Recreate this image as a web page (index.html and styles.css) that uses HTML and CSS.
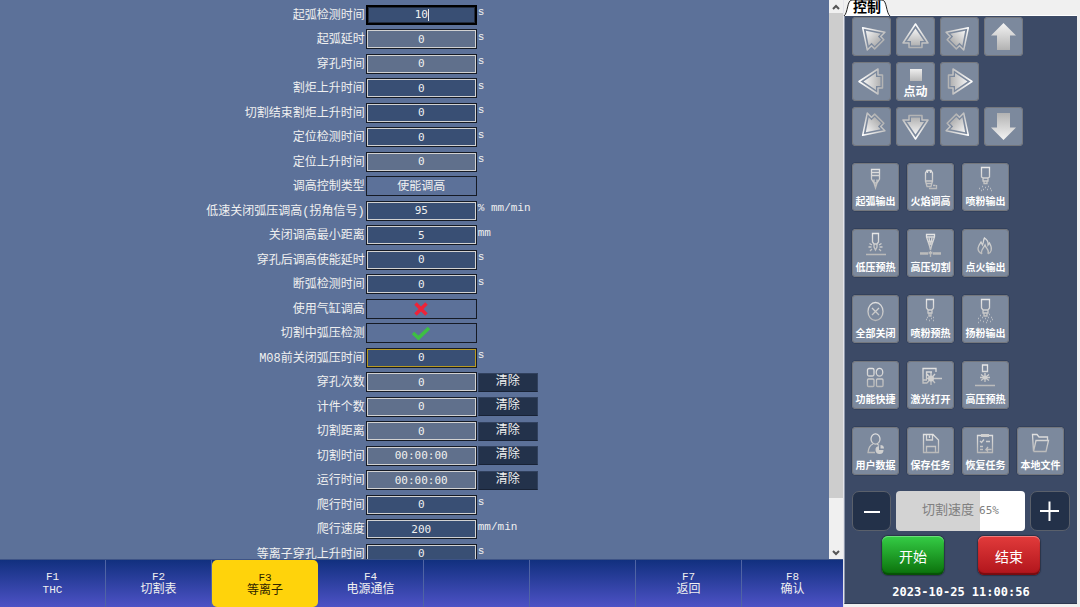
FILE: index.html
```html
<!DOCTYPE html>
<html lang="zh-CN">
<head>
    <meta charset="UTF-8">
    <meta name="viewport" content="width=device-width, initial-scale=1.0">
    <title>等离子</title>
    <link rel="stylesheet" href="styles.css">
</head>
<body>
    <svg class="defs" width="0" height="0" aria-hidden="true">
        <defs>
            <linearGradient id="arrow-line" x1="0" y1="0" x2="0" y2="1">
                <stop offset="0" stop-color="#fff"/>
                <stop offset="1" stop-color="#b4b4b4"/>
            </linearGradient>
            <linearGradient id="arrow-fill" x1="0" y1="0" x2="0" y2="1">
                <stop offset="0" stop-color="#f4f4f4"/>
                <stop offset="1" stop-color="#b2b2b2"/>
            </linearGradient>
            <linearGradient id="icon-line" gradientUnits="userSpaceOnUse" x1="0" y1="0" x2="0" y2="24">
                <stop offset="0" stop-color="#e8e8e8"/>
                <stop offset="1" stop-color="#b4b4b4"/>
            </linearGradient>
        </defs>
        <symbol id="arrow" viewBox="0 0 39 39">
            <path d="M19.5 7L32 26H26V30.500H13V26H7Z" fill="none" stroke="url(#arrow-line)" stroke-width="1.500" stroke-linejoin="round"/>
            <path d="M19.500 11.500L28 24H24V28.500H15V24H11Z" fill="url(#arrow-fill)"/>
        </symbol>
        <symbol id="big-arrow" viewBox="0 0 39 39">
            <path d="M19.500 6L32 18.500H26V33H13V18.500H7Z" fill="url(#arrow-fill)"/>
        </symbol>
    </svg>

    <div class="screen">
        <main class="main">
            <div class="viewport">
                <form class="params">
                    <div class="row"><label for="p1">起弧检测时间</label><input class="field active" id="p1" value="10"><span class="unit">s</span></div>
                    <div class="row"><label for="p2">起弧延时</label><input class="field muted" id="p2" value="0"><span class="unit">s</span></div>
                    <div class="row"><label for="p3">穿孔时间</label><input class="field muted" id="p3" value="0"><span class="unit">s</span></div>
                    <div class="row"><label for="p4">割炬上升时间</label><input class="field" id="p4" value="0"><span class="unit">s</span></div>
                    <div class="row"><label for="p5">切割结束割炬上升时间</label><input class="field" id="p5" value="0"><span class="unit">s</span></div>
                    <div class="row"><label for="p6">定位检测时间</label><input class="field" id="p6" value="0"><span class="unit">s</span></div>
                    <div class="row"><label for="p7">定位上升时间</label><input class="field muted" id="p7" value="0"><span class="unit">s</span></div>
                    <div class="row"><label for="p8">调高控制类型</label><select class="choice" id="p8"><option>使能调高</option></select></div>
                    <div class="row"><label for="p9">低速关闭弧压调高(拐角信号)</label><input class="field" id="p9" value="95"><span class="unit">% mm/min</span></div>
                    <div class="row"><label for="p10">关闭调高最小距离</label><input class="field" id="p10" value="5"><span class="unit">mm</span></div>
                    <div class="row"><label for="p11">穿孔后调高使能延时</label><input class="field" id="p11" value="0"><span class="unit">s</span></div>
                    <div class="row"><label for="p12">断弧检测时间</label><input class="field" id="p12" value="0"><span class="unit">s</span></div>
                    <div class="row">
                        <label for="p13">使用气缸调高</label>
                        <span class="check">
                            <input type="checkbox" id="p13">
                            <svg width="20" height="16" viewBox="0 0 20 16"><path d="M4.500 2.500L15.500 13.500M15.500 2.500L4.500 13.500" stroke="#ee2338" stroke-width="3.500"/></svg>
                        </span>
                    </div>
                    <div class="row">
                        <label for="p14">切割中弧压检测</label>
                        <span class="check">
                            <input type="checkbox" id="p14" checked>
                            <svg width="20" height="16" viewBox="0 0 20 16"><path d="M2 8L7.500 13L18 3" fill="none" stroke="#3dc043" stroke-width="3.500"/></svg>
                        </span>
                    </div>
                    <div class="row"><label for="p15">M08前关闭弧压时间</label><input class="field marked" id="p15" value="0"><span class="unit">s</span></div>
                    <div class="row"><label for="p16">穿孔次数</label><input class="field muted" id="p16" value="0"><button type="button" class="clear">清除</button></div>
                    <div class="row"><label for="p17">计件个数</label><input class="field muted" id="p17" value="0"><button type="button" class="clear">清除</button></div>
                    <div class="row"><label for="p18">切割距离</label><input class="field muted" id="p18" value="0"><button type="button" class="clear">清除</button></div>
                    <div class="row"><label for="p19">切割时间</label><input class="field muted" id="p19" value="00:00:00"><button type="button" class="clear">清除</button></div>
                    <div class="row"><label for="p20">运行时间</label><input class="field muted" id="p20" value="00:00:00"><button type="button" class="clear">清除</button></div>
                    <div class="row"><label for="p21">爬行时间</label><input class="field" id="p21" value="0"><span class="unit">s</span></div>
                    <div class="row"><label for="p22">爬行速度</label><input class="field" id="p22" value="200"><span class="unit">mm/min</span></div>
                    <div class="row"><label for="p23">等离子穿孔上升时间</label><input class="field" id="p23" value="0"><span class="unit">s</span></div>
                </form>
                <div class="scrollbar">
                    <button type="button" aria-label="向上"><svg width="8" height="6" viewBox="0 0 8 6"><path d="M1 5L4 2L7 5"/></svg></button>
                    <div class="track"><div class="thumb"></div></div>
                    <button type="button" aria-label="向下"><svg width="8" height="6" viewBox="0 0 8 6"><path d="M1 1L4 4L7 1"/></svg></button>
                </div>
            </div>
            <nav class="keys">
                <button type="button"><span class="latin">F1</span><span class="latin">THC</span></button>
                <button type="button"><span class="latin">F2</span><span>切割表</span></button>
                <button type="button" class="current"><span class="latin">F3</span><span>等离子</span></button>
                <button type="button"><span class="latin">F4</span><span>电源通信</span></button>
                <button type="button" aria-label="F5"></button>
                <button type="button" aria-label="F6"></button>
                <button type="button"><span class="latin">F7</span><span>返回</span></button>
                <button type="button"><span class="latin">F8</span><span>确认</span></button>
            </nav>
        </main>

        <aside class="side">
            <div class="tabs">
                <button type="button" class="tab">
                    <svg width="48" height="16" viewBox="0 0 48 16"><path d="M1 16C5 13 4 0 9 0H39C44 0 43 13 47 16" fill="#fff" stroke="#222"/></svg>
                    <span>控制</span>
                </button>
            </div>
            <div class="panel">
                <div class="jog">
                    <button type="button" aria-label="左上"><svg class="r315"><use href="#arrow"/></svg></button>
                    <button type="button" aria-label="上"><svg><use href="#arrow"/></svg></button>
                    <button type="button" aria-label="右上"><svg class="r45"><use href="#arrow"/></svg></button>
                    <button type="button" aria-label="升"><svg><use href="#big-arrow"/></svg></button>
                    <button type="button" aria-label="左"><svg class="r270"><use href="#arrow"/></svg></button>
                    <button type="button" class="step"><i></i><span>点动</span></button>
                    <button type="button" aria-label="右"><svg class="r90"><use href="#arrow"/></svg></button>
                    <button type="button" class="first" aria-label="左下"><svg class="r225"><use href="#arrow"/></svg></button>
                    <button type="button" aria-label="下"><svg class="r180"><use href="#arrow"/></svg></button>
                    <button type="button" aria-label="右下"><svg class="r135"><use href="#arrow"/></svg></button>
                    <button type="button" aria-label="降"><svg class="r180"><use href="#big-arrow"/></svg></button>
                </div>

                <div class="tools">
                    <button type="button"><svg viewBox="0 0 28 24"><path d="M9.500 2.500H17.500V12L15 16H12L9.500 12ZM9.500 5.500H17.500M9.500 8.500H17.500M12 12.500V16M15 12.500V16M12 16L13.500 21L15 16M12.500 18H14.500"/></svg><span>起弧输出</span></button>
                    <button type="button"><svg viewBox="0 0 28 24"><path d="M8.500 14V6L10 3.500H14L15.500 6V14ZM8.500 14L10 19.500H14L15.500 14M9 16.500H15M10.500 3V6M13.500 3V6M12 21.500H19.500V18M16 18.500H18.500"/></svg><span>火焰调高</span></button>
                    <button type="button"><svg viewBox="0 0 28 24"><path d="M9.500 .5H17.500V10L16 11H11L9.500 10ZM11 11V14H16V11M12 14V16.500H15V14"/><path class="dots" d="M10 19.500H11M13 20.500H14M16 19.500H17M7 21.500H8M11 22.500H12M15 22.500H16M18 21.500H19M9 23.500H10M19 23.500H20"/></svg><span>喷粉输出</span></button>
                    <button type="button" class="new-row"><svg viewBox="0 0 28 24"><path d="M10.500 .5H16.500V9L15 11H12L10.500 9ZM12 11V14L13.500 17L15 14V11M10 12L7.500 10.500M9.500 14H6.500M10 16L8 18M17 12L19.500 10.500M17.500 14H20.500M17 16L19 18M4 21.500H24"/></svg><span>低压预热</span></button>
                    <button type="button"><svg viewBox="0 0 28 24"><path d="M9.500 1.500H17.500V4L14.500 13L13.500 17L12.500 13L9.500 4ZM9.500 4H17.500M12 5L13.500 12L15 5M11 8.500H16M3 20H11M16 20H24M3 21H11M16 21H24M13.500 18V24M11.500 21L15.500 19M11.500 19L15.500 21"/></svg><span>高压切割</span></button>
                    <button type="button"><svg viewBox="0 0 28 24"><path d="M10 21C3 17 7 12 9 9L10.500 12C12 9 11 7 12.500 5C17 8 16 10 16 12L17.500 10C21 16 19 20 16 21M10 21C8 18 11 16 13 12C14 16 18 17 16 21"/></svg><span>点火输出</span></button>
                    <button type="button" class="new-row"><svg viewBox="0 0 28 24"><ellipse cx="13.500" cy="12.500" rx="7.500" ry="9"/><path d="M10 9L17 16M17 9L10 16"/></svg><span>全部关闭</span></button>
                    <button type="button"><svg viewBox="0 0 28 24"><path d="M9.500 .5H16.500V9L15 11H11L9.500 9ZM11 11V14H15V11M12 14V17H14V14"/><path class="dots" d="M10 18.500H11M14 19.500H15M16 18.500H17M9 20.500H10M12 21.500H13M16 21.500H17"/></svg><span>喷粉预热</span></button>
                    <button type="button"><svg viewBox="0 0 28 24"><path d="M9.500 .5H17.500V9L16 11H11L9.500 9ZM11 11V14H16V11M12 14V17H15V14"/><path class="dots" d="M8 16.500H9M17 15.500H18M10 18.500H11M13 19.500H14M16 18.500H17M19 18.500H20M6 19.500H7M8 21.500H9M11 22.500H12M15 21.500H16M18 22.500H19M20 20.500H21M6 23.500H7M14 23.500H15"/></svg><span>扬粉输出</span></button>
                    <button type="button" class="new-row"><svg viewBox="0 0 28 24"><rect x="5.500" y="3.500" width="6.500" height="7.500" rx="1.500"/><ellipse cx="17.500" cy="7.250" rx="3.250" ry="3.900"/><rect x="5.500" y="14" width="6.500" height="7.500" rx="1"/><rect x="14.500" y="14" width="6.500" height="7.500" rx="1"/></svg><span>功能快捷</span></button>
                    <button type="button"><svg viewBox="0 0 28 24"><path d="M10 18H6V3.500H19V7M9.500 14V7H15M6 15H10M9 13.500H25M14 7.500V20M10 9L18 18M18 9L10 18"/><circle cx="14" cy="13.500" r="3" class="solid"/></svg><span>激光打开</span></button>
                    <button type="button"><svg viewBox="0 0 28 24"><path d="M10.500 0V6.500H15.500V0ZM13 8V17M9 9.500L17 15.500M17 9.500L9 15.500M8 12.500H18M3 20.500H23"/><circle cx="13" cy="12.500" r="2" class="solid"/></svg><span>高压预热</span></button>
                    <button type="button" class="new-row"><svg viewBox="0 0 28 24"><ellipse cx="13.500" cy="8" rx="4.500" ry="5.200"/><path d="M11 13C8 14 6.500 17 6 21.500H13M15 13L17 14.500"/><path class="solid" d="M17 15V19H21.500A4 4 0 1 1 17 15ZM18.500 14V17.500H22C22 15 20.500 14 18.500 14Z"/></svg><span>用户数据</span></button>
                    <button type="button"><svg viewBox="0 0 28 24"><path d="M6.500 3.500H16L21.500 9V21.500H6.500ZM9.500 3.500V9H15.500V3.500M12.500 4.500V7M9.500 21V15.500H18.500V21"/></svg><span>保存任务</span></button>
                    <button type="button"><svg viewBox="0 0 28 24"><path d="M9 4.500H5.500V21.500H20.500V4.500H17M8 10L9.500 11.500L12 8.500M14 10.500H18M8 15.500H11M8 18.500H11M19.500 18.500H14L16 16M14 18.500L16 20.500"/><rect x="9" y="3" width="8" height="3" class="solid"/></svg><span>恢复任务</span></button>
                    <button type="button"><svg viewBox="0 0 28 24"><path d="M6.500 20.500L5.500 3.500H10L12 6H20.500V9M6.500 20.500H19L21.500 9.500H9L6.500 20.500"/></svg><span>本地文件</span></button>
                </div>

                <div class="speed">
                    <button type="button" aria-label="减速"><svg width="36" height="36" viewBox="0 0 36 36"><path d="M10 19H26"/></svg></button>
                    <label class="slider">
                        <input type="range" min="0" max="100" value="65">
                        <span class="caption"><span>切割速度</span><span class="percent">65%</span></span>
                    </label>
                    <button type="button" aria-label="加速"><svg width="36" height="36" viewBox="0 0 36 36"><path d="M8 18H27M17.500 8.500V28"/></svg></button>
                </div>

                <div class="run">
                    <button type="button" class="start">开始</button>
                    <button type="button" class="stop">结束</button>
                </div>
                <time class="clock" datetime="2023-10-25T11:00:56">2023-10-25 11:00:56</time>
            </div>
        </aside>
    </div>
</body>
</html>
```
FILE: styles.css
```css
* {
    box-sizing: border-box;
}

body {
    margin: 0;
    font-family: "Liberation Mono", "Noto Sans CJK SC", monospace;
    font-size: 12px;
    color: #f0f0f0;
    background: #f0f0f0;
}

button, input, select {
    margin: 0;
    padding: 0;
    font: inherit;
    color: inherit;
    border: none;
    border-radius: 0;
    appearance: none;
}

button {
    cursor: pointer;
}

svg {
    display: block;
}

.defs {
    position: absolute;
}

.screen {
    display: grid;
    grid-template-columns: minmax(0, 1fr) 236px;
    height: 100vh;
}

.main {
    display: flex;
    flex-direction: column;
    min-height: 0;
    background: #5c7199;
    border-right: 1px solid #e4e4ea;
}

.viewport {
    flex: 1;
    display: flex;
    min-height: 0;
}

/* parameter list */
.params {
    flex: 1;
    padding-top: 2px;
    overflow: hidden;
}

.row {
    display: grid;
    grid-template-columns: 44% 111px auto;
    justify-content: start;
    align-items: center;
    column-gap: 1px;
    height: 25px;
}

.row:nth-child(even) {
    height: 24px;
}

.row label {
    padding-top: 2px;
    text-align: right;
    line-height: 18px;
    white-space: nowrap;
}

.field, .choice, .check {
    width: 111px;
    height: 20px;
}

.field {
    font-family: "DejaVu Sans Mono", monospace;
    font-size: 11px;
    text-align: center;
    background: #394f74;
    border: 1px solid #151a24;
    box-shadow: inset 0 0 0 1px #d2d2d2;
    outline: none;
}

.field.muted {
    background: #60708c;
}

.field.marked {
    box-shadow: inset 0 0 0 1px #b79a22;
}

.field.active {
    border: 2px solid #000;
    box-shadow: inset 0 0 0 1px #222c3e;
    background: linear-gradient(#e8e8e8, #e8e8e8) calc(50% + 7px) 50% / 1px 12px no-repeat #394f74;
}

.choice, .check {
    background: transparent;
    border: 1px solid #151a24;
}

.choice {
    padding-top: 2px;
    text-align: center;
    text-align-last: center;
}

.check {
    display: grid;
    place-items: center;
}

.check input, .check svg {
    grid-area: 1 / 1;
}

.check input {
    width: 100%;
    height: 100%;
}

.check svg {
    pointer-events: none;
}

.unit {
    align-self: start;
    font-size: 11px;
    line-height: 20px;
}

.clear {
    width: 60px;
    height: 19px;
    line-height: 17px;
    background: #23324b;
    border: 1px solid #31415e;
    border-bottom-color: #182235;
}

.scrollbar {
    width: 14px;
    display: flex;
    flex-direction: column;
    background: #f0f0f0;
}

.scrollbar button {
    height: 13px;
    display: grid;
    place-items: center;
    background: #f0f0f0;
}

.scrollbar path {
    fill: none;
    stroke: #555;
    stroke-width: 2;
}

.track {
    flex: 1;
}

.thumb {
    height: 91%;
    background: #cdcdcd;
}

/* function keys */
.keys {
    display: grid;
    grid-template-columns: repeat(7, 106fr) 101fr;
    height: 48px;
    background: linear-gradient(#11307f, #4d52c5);
    border-top: 1px solid #3d5386;
}

.keys button {
    display: flex;
    flex-direction: column;
    align-items: center;
    justify-content: center;
    padding-top: 1px;
    line-height: 13px;
    background: transparent;
    border-right: 1px solid #5064a4;
}

.keys button:last-child {
    border-right: none;
}

.keys .latin {
    font-size: 11px;
}

.keys .current {
    padding-top: 3px;
    color: #2e2400;
    background: #ffd30b;
    border-right: none;
    border-radius: 5px;
}

/* control panel */
.side {
    display: flex;
    flex-direction: column;
    padding: 0 3px 3px 0;
}

.tabs {
    height: 16px;
    border-bottom: 1px solid #fff;
}

.tab {
    position: relative;
    width: 46px;
    height: 15px;
    background: none;
    color: #000;
    font-size: 14px;
    font-weight: bold;
    line-height: 14px;
}

.tab svg {
    position: absolute;
    top: 0;
    left: -1px;
}

.tab span {
    position: relative;
}

.panel {
    flex: 1;
    display: flex;
    flex-direction: column;
    padding: 1px 7px 0 7px;
    background: #3c4a66;
    border-left: 1px solid #8d97ab;
    border-bottom: 1px solid #2d3850;
}

.jog {
    display: grid;
    grid-template-columns: repeat(4, 39px);
    gap: 6px 5px;
}

.jog button, .tools button {
    background: #7c899d;
    box-shadow: inset 0 0 0 1px #74777d;
    border-radius: 4px;
}

.jog button {
    display: grid;
    place-items: center;
    height: 39px;
}

.jog .first {
    grid-column: 1;
}

.jog svg {
    width: 39px;
    height: 39px;
}

.r45 { transform: rotate(45deg); }
.r90 { transform: rotate(90deg); }
.r135 { transform: rotate(135deg); }
.r180 { transform: rotate(180deg); }
.r225 { transform: rotate(225deg); }
.r270 { transform: rotate(270deg); }
.r315 { transform: rotate(315deg); }

.jog .step {
    display: flex;
    flex-direction: column;
    align-items: center;
    justify-content: flex-end;
    gap: 4px;
    font-weight: bold;
    line-height: 16px;
    color: #fff;
}

.step i {
    width: 12px;
    height: 12px;
    background: linear-gradient(#eee, #b8b8b8);
}

.tools {
    display: grid;
    grid-template-columns: repeat(4, 47px);
    gap: 18px 8px;
    margin-top: 17px;
}

.tools .new-row {
    grid-column: 1;
}

.tools button {
    display: flex;
    flex-direction: column;
    align-items: center;
    height: 48px;
    padding-top: 4px;
    box-shadow: inset 0 0 0 1px #74777d, 0 0 0 1px #33415c;
    color: #fff;
    font-size: 10px;
    font-weight: bold;
    line-height: 14px;
    white-space: nowrap;
}

.tools svg {
    width: 28px;
    height: 24px;
    margin-bottom: 5px;
    fill: none;
    stroke: url(#icon-line);
    stroke-width: 1.3;
    overflow: visible;
}

.tools .dots {
    stroke: #b8bcc2;
}

.tools .solid {
    fill: #d0d0d0;
    stroke: none;
}

.speed {
    display: grid;
    grid-template-columns: 39px minmax(0, 1fr) 40px;
    gap: 5px;
    margin-top: 16px;
}

.speed button {
    display: grid;
    place-items: center;
    height: 40px;
    background: #233149;
    border: 1px solid #5a606b;
    border-radius: 7px;
}

.speed svg {
    stroke: #fff;
    stroke-width: 2;
}

.slider {
    position: relative;
    display: block;
    height: 40px;
    color: #808080;
}

.slider input {
    display: block;
    width: 100%;
    height: 100%;
    border-radius: 4px;
    background: linear-gradient(90deg, #d3d3d3 65%, #fff 65%);
}

.slider input::-webkit-slider-thumb {
    appearance: none;
    width: 1px;
    height: 40px;
    background: transparent;
}

.caption {
    position: absolute;
    inset: 0;
    display: flex;
    align-items: center;
    justify-content: center;
    gap: 5px;
    font-size: 13px;
    line-height: 16px;
    pointer-events: none;
}

.percent {
    font-family: "DejaVu Sans Mono", monospace;
    font-size: 11px;
}

.run {
    display: flex;
    justify-content: center;
    gap: 34px;
    margin-top: 5px;
}

.run button {
    width: 62px;
    height: 39px;
    border-radius: 6px;
    color: #fff;
    font-size: 14px;
}

.start {
    background: linear-gradient(#35cd46, #0a6f0a);
    box-shadow: inset 0 1px 0 #6be07a, inset 0 -2px 1px #075007, 0 0 1px 1px #2a3348;
}

.stop {
    background: linear-gradient(#e23b3b, #b0141b);
    box-shadow: inset 0 1px 0 #f07d7d, inset 0 -2px 1px #770c10, 0 0 1px 1px #2a3348;
}

.clock {
    margin-top: 9px;
    text-align: center;
    font-family: "DejaVu Sans Mono", monospace;
    font-weight: bold;
    line-height: 16px;
    color: #fff;
}
```
